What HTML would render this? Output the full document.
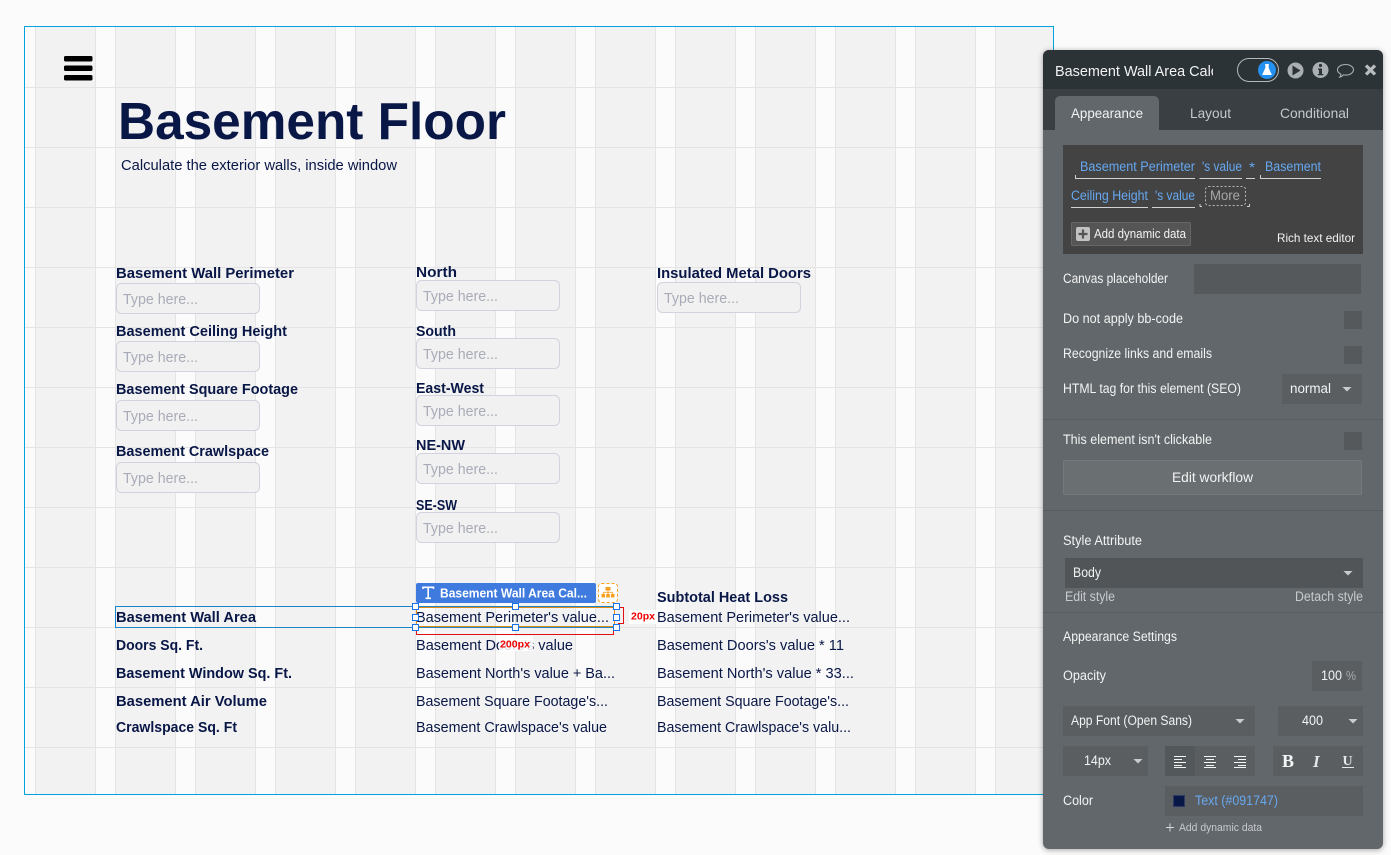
<!DOCTYPE html>
<html lang="en"><head><meta charset="utf-8"><title>Basement Floor</title>
<style>
html,body{margin:0;padding:0;background:#fbfbfb;width:1391px;height:855px;overflow:hidden}
svg{display:block}
text{font-family:"Liberation Sans",sans-serif;white-space:pre}
.l{font-size:14.5px;font-weight:700;fill:#091747}
.b{font-size:14.5px;fill:#091747}
.p{font-size:14.5px;fill:#a9acb8}
.w{font-size:13.5px;fill:#f2f3f3}
.u{font-size:13.5px;fill:#66a8f0}
.s{font-size:13.5px;fill:#c8cbcd}
.r{font-size:10px;font-weight:700;fill:#f00000}
.i{fill:#f1f1f1;stroke:#d2d3de;stroke-width:1}
.k{fill:#55595c}
.d{fill:#5a5e61}
.h{fill:#fff;stroke:#1a73e8;stroke-width:1.2}
.ul{stroke:#d0d2d3;stroke-width:1;fill:none}
.a{fill:#c9cccd}
.t{fill:#f4f5f5}
</style></head><body>
<svg width="1391" height="855" viewBox="0 0 1391 855" xmlns="http://www.w3.org/2000/svg" shape-rendering="crispEdges">
<defs>
<pattern id="c" patternUnits="userSpaceOnUse" x="35" y="0" width="80" height="60"><rect width="60" height="60" fill="#f2f2f2"/><rect width="1" height="60" fill="#e4e4e4"/><rect x="60" width="1" height="60" fill="#e4e4e4"/></pattern>
<clipPath id="hc"><rect x="1050" y="55" width="163" height="30"/></clipPath>
</defs>
<rect width="1391" height="855" fill="#fbfbfb"/>
<rect x="25" y="27" width="1028" height="767" fill="url(#c)"/>
<g fill="#e4e4e4"><rect x="25" y="87" width="1028" height="1"/><rect x="25" y="147" width="1028" height="1"/><rect x="25" y="207" width="1028" height="1"/><rect x="25" y="267" width="1028" height="1"/><rect x="25" y="327" width="1028" height="1"/><rect x="25" y="387" width="1028" height="1"/><rect x="25" y="447" width="1028" height="1"/><rect x="25" y="507" width="1028" height="1"/><rect x="25" y="567" width="1028" height="1"/><rect x="25" y="627" width="1028" height="1"/><rect x="25" y="687" width="1028" height="1"/><rect x="25" y="747" width="1028" height="1"/></g>
<rect x="24.5" y="26.5" width="1029" height="768" fill="none" stroke="#00a3dc"/>

<g fill="#000" shape-rendering="auto"><rect x="64" y="56" width="28.5" height="5.5" rx="1.6"/><rect x="64" y="65.5" width="28.5" height="5.5" rx="1.6"/><rect x="64" y="75" width="28.5" height="5.5" rx="1.6"/></g>

<g shape-rendering="auto">
<text x="118" y="139" font-size="52" font-weight="700" fill="#091747" textLength="388" lengthAdjust="spacingAndGlyphs">Basement Floor</text>
<text class="b" x="121" y="170" textLength="276" lengthAdjust="spacingAndGlyphs">Calculate the exterior walls, inside window</text>

<text class="l" x="116" y="278" textLength="178" lengthAdjust="spacingAndGlyphs">Basement Wall Perimeter</text>
<rect class="i" x="116.500" y="283.500" width="143" height="30" rx="5"/><text class="p" x="123" y="304" textLength="75" lengthAdjust="spacingAndGlyphs">Type here...</text>
<text class="l" x="116" y="336" textLength="171" lengthAdjust="spacingAndGlyphs">Basement Ceiling Height</text>
<rect class="i" x="116.500" y="341.500" width="143" height="30" rx="5"/><text class="p" x="123" y="362" textLength="75" lengthAdjust="spacingAndGlyphs">Type here...</text>
<text class="l" x="116" y="394" textLength="182" lengthAdjust="spacingAndGlyphs">Basement Square Footage</text>
<rect class="i" x="116.500" y="400.500" width="143" height="30" rx="5"/><text class="p" x="123" y="421" textLength="75" lengthAdjust="spacingAndGlyphs">Type here...</text>
<text class="l" x="116" y="456" textLength="153" lengthAdjust="spacingAndGlyphs">Basement Crawlspace</text>
<rect class="i" x="116.500" y="462.500" width="143" height="30" rx="5"/><text class="p" x="123" y="483" textLength="75" lengthAdjust="spacingAndGlyphs">Type here...</text>

<text class="l" x="416" y="277" textLength="41" lengthAdjust="spacingAndGlyphs">North</text>
<rect class="i" x="416.500" y="280.500" width="143" height="30" rx="5"/><text class="p" x="423" y="301" textLength="75" lengthAdjust="spacingAndGlyphs">Type here...</text>
<text class="l" x="416" y="336" textLength="40" lengthAdjust="spacingAndGlyphs">South</text>
<rect class="i" x="416.500" y="338.500" width="143" height="30" rx="5"/><text class="p" x="423" y="359" textLength="75" lengthAdjust="spacingAndGlyphs">Type here...</text>
<text class="l" x="416" y="393" textLength="68" lengthAdjust="spacingAndGlyphs">East-West</text>
<rect class="i" x="416.500" y="395.500" width="143" height="30" rx="5"/><text class="p" x="423" y="416" textLength="75" lengthAdjust="spacingAndGlyphs">Type here...</text>
<text class="l" x="416" y="450" textLength="49" lengthAdjust="spacingAndGlyphs">NE-NW</text>
<rect class="i" x="416.500" y="453.500" width="143" height="30" rx="5"/><text class="p" x="423" y="474" textLength="75" lengthAdjust="spacingAndGlyphs">Type here...</text>
<text class="l" x="416" y="510" textLength="41" lengthAdjust="spacingAndGlyphs">SE-SW</text>
<rect class="i" x="416.500" y="512.500" width="143" height="30" rx="5"/><text class="p" x="423" y="533" textLength="75" lengthAdjust="spacingAndGlyphs">Type here...</text>

<text class="l" x="657" y="278" textLength="154" lengthAdjust="spacingAndGlyphs">Insulated Metal Doors</text>
<rect class="i" x="657.500" y="282.500" width="143" height="30" rx="5"/><text class="p" x="664" y="303" textLength="75" lengthAdjust="spacingAndGlyphs">Type here...</text>

<text class="l" x="116" y="622" textLength="140" lengthAdjust="spacingAndGlyphs">Basement Wall Area</text>
<text class="l" x="116" y="650" textLength="87" lengthAdjust="spacingAndGlyphs">Doors Sq. Ft.</text>
<text class="l" x="116" y="678" textLength="176" lengthAdjust="spacingAndGlyphs">Basement Window Sq. Ft.</text>
<text class="l" x="116" y="706" textLength="151" lengthAdjust="spacingAndGlyphs">Basement Air Volume</text>
<text class="l" x="116" y="732" textLength="121" lengthAdjust="spacingAndGlyphs">Crawlspace Sq. Ft</text>

<text class="b" x="416" y="622" textLength="193" lengthAdjust="spacingAndGlyphs">Basement Perimeter's value...</text>
<text class="b" x="416" y="650" textLength="157" lengthAdjust="spacingAndGlyphs">Basement Doors's value</text>
<text class="b" x="416" y="678" textLength="199" lengthAdjust="spacingAndGlyphs">Basement North's value + Ba...</text>
<text class="b" x="416" y="706" textLength="192" lengthAdjust="spacingAndGlyphs">Basement Square Footage's...</text>
<text class="b" x="416" y="732" textLength="191" lengthAdjust="spacingAndGlyphs">Basement Crawlspace's value</text>

<text class="l" x="657" y="602" textLength="131" lengthAdjust="spacingAndGlyphs">Subtotal Heat Loss</text>
<text class="b" x="657" y="622" textLength="193" lengthAdjust="spacingAndGlyphs">Basement Perimeter's value...</text>
<text class="b" x="657" y="650" textLength="187" lengthAdjust="spacingAndGlyphs">Basement Doors's value * 11</text>
<text class="b" x="657" y="678" textLength="197" lengthAdjust="spacingAndGlyphs">Basement North's value * 33...</text>
<text class="b" x="657" y="706" textLength="192" lengthAdjust="spacingAndGlyphs">Basement Square Footage's...</text>
<text class="b" x="657" y="732" textLength="194" lengthAdjust="spacingAndGlyphs">Basement Crawlspace's valu...</text>
</g>

<!-- selection -->
<rect x="115.500" y="606.500" width="301" height="21" fill="none" stroke="#1a86c8"/>
<rect x="416.500" y="607.500" width="198" height="19" fill="none" stroke="#e58a12" stroke-width="1"/>
<rect x="416" y="606" width="200" height="1" fill="#1a86c8"/>
<rect x="416" y="627" width="200" height="1" fill="#1a86c8"/>
<path d="M416.500 629V634.500H613.500V629M618 607.500H623.500V623.500H618" fill="none" stroke="#e01010"/>
<rect x="629" y="610" width="28" height="14" fill="#fff"/>
<rect x="499" y="636" width="34" height="15" fill="#fff" opacity=".85"/>
<g shape-rendering="auto">
<text class="r" x="631" y="619.500" textLength="24" lengthAdjust="spacingAndGlyphs">20px</text>
<text class="r" x="500" y="647.500" textLength="30" lengthAdjust="spacingAndGlyphs">200px</text>
<rect x="416" y="583" width="180" height="20" rx="2" fill="#3f7bdf"/>
<path d="M423 589V587.300H433.500V589M428.200 587.300V598.300M425.500 598.300H431" fill="none" stroke="#fff" stroke-width="1.600"/>
<text x="440" y="597.500" font-size="12.500" font-weight="700" fill="#fff" textLength="147" lengthAdjust="spacingAndGlyphs">Basement Wall Area Cal...</text>
<rect x="598.500" y="583.500" width="19" height="19" rx="3" fill="#fff" stroke="#f5a623" stroke-dasharray="3 2"/>
<path d="M605.500 587h5v3.500h-5zM601.500 594h3.600v3.500h-3.600zM606.200 594h3.600v3.500h-3.600zM610.900 594h3.600v3.500h-3.600z" fill="#f5a020"/>
<path d="M608 590.500V594M603.300 594V592.300H612.700V594" fill="none" stroke="#f5a020" stroke-width=".8"/>
</g>
<g>
<rect class="h" x="412.500" y="603.500" width="6" height="6"/><rect class="h" x="512.500" y="603.500" width="6" height="6"/><rect class="h" x="613.500" y="603.500" width="6" height="6"/>
<rect class="h" x="412.500" y="614.500" width="6" height="6"/><rect class="h" x="613.500" y="614.500" width="6" height="6"/>
<rect class="h" x="412.500" y="624.500" width="6" height="6"/><rect class="h" x="512.500" y="624.500" width="6" height="6"/><rect class="h" x="613.500" y="624.500" width="6" height="6"/>
</g>

<!-- panel -->
<g shape-rendering="auto">
<rect x="1043" y="50" width="340" height="799" rx="6" fill="#62676b" style="filter:drop-shadow(0 1px 3px rgba(0,0,0,.35))"/>
<path d="M1043 89V56a6 6 0 0 1 6-6H1377a6 6 0 0 1 6 6V89Z" fill="#2b3337"/>
<rect x="1043" y="89" width="340" height="41" fill="#393f43"/>
<path d="M1055 130V101a5 5 0 0 1 5-5H1154a5 5 0 0 1 5 5V130Z" fill="#62676b"/>

<g clip-path="url(#hc)"><text x="1055" y="76" font-size="14.500" fill="#f2f3f3" textLength="163" lengthAdjust="spacingAndGlyphs">Basement Wall Area Calc</text></g>
<rect x="1237.500" y="58.500" width="41" height="23" rx="11.500" fill="none" stroke="#b5b9bb" stroke-width="1"/>
<circle cx="1267" cy="70" r="9" fill="#2490f0"/>
<path d="M1265.200 64.500H1268.800M1265.800 64.500V68L1262.800 74.500H1271.200L1268.200 68V64.500" fill="#fff" stroke="#fff" stroke-width=".9" stroke-linejoin="round"/>
<circle cx="1295.500" cy="70.500" r="8" fill="#a9afb2"/><path d="M1292.500 65.500L1300.500 70.500L1292.500 75.500Z" fill="#2b3337"/>
<circle cx="1320.500" cy="70" r="8" fill="#a9afb2"/><circle cx="1320.500" cy="65.500" r="1.600" fill="#2b3337"/><path d="M1318 68.500H1322V74H1323.300V75.300H1317.800V74H1319V69.800H1318Z" fill="#2b3337"/>
<path d="M1345.500 64.500c4.600 0 8 2.400 8 5.300s-3.400 5.300-8 5.300c-.8 0-1.400 0-2.100-.2-1 1.100-2.300 2-3.700 2.200.7-.8 1.200-1.700 1.300-2.900-2.100-.9-3.500-2.500-3.500-4.400 0-2.900 3.400-5.300 8-5.300Z" fill="none" stroke="#a9afb2" stroke-width="1.100"/>
<path d="M1366 65.500L1375 74.500M1375 65.500L1366 74.500" stroke="#b7bcbe" stroke-width="3.300" stroke-linecap="butt"/>

<text x="1071" y="118" font-size="14" fill="#f2f3f3" textLength="72" lengthAdjust="spacingAndGlyphs">Appearance</text>
<text x="1190" y="118" font-size="14" fill="#c6c9cb" textLength="41" lengthAdjust="spacingAndGlyphs">Layout</text>
<text x="1280" y="118" font-size="14" fill="#c6c9cb" textLength="69" lengthAdjust="spacingAndGlyphs">Conditional</text>

<rect x="1063" y="145" width="300" height="109" fill="#434343"/>
<text class="u" x="1080" y="171" textLength="115" lengthAdjust="spacingAndGlyphs">Basement Perimeter</text>
<text class="u" x="1202" y="171" textLength="40" lengthAdjust="spacingAndGlyphs">'s value</text>
<text class="u" x="1249" y="172" textLength="6" lengthAdjust="spacingAndGlyphs">*</text>
<text class="u" x="1265" y="171" textLength="56" lengthAdjust="spacingAndGlyphs">Basement</text>
<text class="u" x="1071" y="200" textLength="77" lengthAdjust="spacingAndGlyphs">Ceiling Height</text>
<text class="u" x="1155" y="200" textLength="40" lengthAdjust="spacingAndGlyphs">'s value</text>
<path class="ul" d="M1075.500 175V178.500H1195M1199.500 178.500H1242M1246 178.500H1255M1260.500 175V178.500H1321M1071 207.500H1148M1152 207.500H1195M1200 204V206.500M1200 206.500H1202M1249.500 206.500V204M1249.500 206.500H1247"/>
<rect x="1205.500" y="186.500" width="40" height="19" rx="3" fill="none" stroke="#b8b8b8" stroke-dasharray="2 2"/>
<text x="1210" y="200" font-size="13.500" fill="#a8a8a8" textLength="30" lengthAdjust="spacingAndGlyphs">More</text>
<rect x="1071.500" y="222.500" width="119" height="23" rx="1" fill="#555" stroke="#666"/>
<rect x="1076" y="227" width="14" height="14" rx="2" fill="#c2c2c2"/><path d="M1083 229.500V238.500M1078.500 234H1087.500" stroke="#555" stroke-width="2.200"/>
<text x="1094" y="238" font-size="12.500" fill="#f2f3f3" textLength="92" lengthAdjust="spacingAndGlyphs">Add dynamic data</text>
<text x="1277" y="242" font-size="12" fill="#f2f3f3" textLength="78" lengthAdjust="spacingAndGlyphs">Rich text editor</text>

<text class="w" x="1063" y="283" textLength="105" lengthAdjust="spacingAndGlyphs">Canvas placeholder</text>
<rect x="1194" y="264" width="167" height="30" class="k"/>
<text class="w" x="1063" y="323" textLength="120" lengthAdjust="spacingAndGlyphs">Do not apply bb-code</text>
<rect x="1344" y="311" width="18" height="18" class="k"/>
<text class="w" x="1063" y="358" textLength="149" lengthAdjust="spacingAndGlyphs">Recognize links and emails</text>
<rect x="1344" y="346" width="18" height="18" class="k"/>
<text class="w" x="1063" y="393" textLength="178" lengthAdjust="spacingAndGlyphs">HTML tag for this element (SEO)</text>
<rect x="1282" y="374" width="80" height="30" class="d"/>
<text class="w" x="1290" y="393" textLength="41" lengthAdjust="spacingAndGlyphs">normal</text>
<path class="a" d="M1342.500 387H1351.500L1347 391.500Z"/>
<rect x="1043" y="419" width="340" height="1" fill="#575c5f"/>
<text class="w" x="1063" y="444" textLength="149" lengthAdjust="spacingAndGlyphs">This element isn't clickable</text>
<rect x="1344" y="432" width="18" height="18" class="k"/>
<rect x="1063.500" y="460.500" width="298" height="34" rx="1" fill="#6a6f72" stroke="#74797c"/>
<text x="1172" y="482" font-size="14" fill="#f2f3f3" textLength="81" lengthAdjust="spacingAndGlyphs">Edit workflow</text>
<rect x="1043" y="510" width="340" height="1" fill="#575c5f"/>
<text class="w" x="1063" y="545" textLength="79" lengthAdjust="spacingAndGlyphs">Style Attribute</text>
<rect x="1065" y="558" width="298" height="30" fill="#515558"/>
<text class="w" x="1073" y="577" textLength="28" lengthAdjust="spacingAndGlyphs">Body</text>
<path class="a" d="M1343.500 571H1352.500L1348 575.500Z"/>
<text class="s" x="1065" y="601" textLength="50" lengthAdjust="spacingAndGlyphs">Edit style</text>
<text class="s" x="1295" y="601" textLength="68" lengthAdjust="spacingAndGlyphs">Detach style</text>
<rect x="1043" y="612" width="340" height="1" fill="#575c5f"/>
<text class="w" x="1063" y="641" textLength="114" lengthAdjust="spacingAndGlyphs">Appearance Settings</text>
<text class="w" x="1063" y="680" textLength="43" lengthAdjust="spacingAndGlyphs">Opacity</text>
<rect x="1312" y="661" width="50" height="30" class="d"/>
<text class="w" x="1321" y="680" textLength="21" lengthAdjust="spacingAndGlyphs">100</text>
<text x="1346" y="680" font-size="13" fill="#a9adaf" textLength="10" lengthAdjust="spacingAndGlyphs">%</text>
<rect x="1063" y="706" width="192" height="30" class="d"/>
<text class="w" x="1071" y="725" textLength="121" lengthAdjust="spacingAndGlyphs">App Font (Open Sans)</text>
<path class="a" d="M1235.500 719H1244.500L1240 723.500Z"/>
<rect x="1278" y="706" width="85" height="30" class="d"/>
<text class="w" x="1302" y="725" textLength="21" lengthAdjust="spacingAndGlyphs">400</text>
<path class="a" d="M1348.500 719H1357.500L1353 723.500Z"/>
<rect x="1063" y="746" width="85" height="30" class="d"/>
<text class="w" x="1084" y="765" textLength="27" lengthAdjust="spacingAndGlyphs">14px</text>
<path class="a" d="M1133.500 759H1142.500L1138 763.500Z"/>
<rect x="1165" y="746" width="90" height="30" class="d"/>
<rect x="1165" y="746" width="30" height="30" fill="#53585a"/>
<g class="t" shape-rendering="crispEdges">
<rect x="1174" y="756" width="12" height="1"/><rect x="1174" y="759" width="8" height="1"/><rect x="1174" y="762" width="12" height="1"/><rect x="1174" y="765" width="8" height="1"/><rect x="1174" y="767" width="12" height="1"/>
<rect x="1204" y="756" width="12" height="1"/><rect x="1206" y="759" width="8" height="1"/><rect x="1204" y="762" width="12" height="1"/><rect x="1206" y="765" width="8" height="1"/><rect x="1204" y="767" width="12" height="1"/>
<rect x="1234" y="756" width="12" height="1"/><rect x="1238" y="759" width="8" height="1"/><rect x="1234" y="762" width="12" height="1"/><rect x="1238" y="765" width="8" height="1"/><rect x="1234" y="767" width="12" height="1"/>
</g>
<rect x="1273" y="746" width="90" height="30" class="d"/>
<text x="1282" y="767" style="font-family:'Liberation Serif',serif" font-size="18" font-weight="700" fill="#f4f5f5">B</text>
<text x="1313" y="767" style="font-family:'Liberation Serif',serif" font-size="17" font-weight="700" font-style="italic" fill="#e4e6e7">I</text>
<text x="1342.500" y="765" style="font-family:'Liberation Serif',serif" font-size="14" font-weight="700" fill="#e4e6e7">U</text>
<rect x="1342" y="767" width="12" height="1" fill="#e4e6e7"/>
<text class="w" x="1063" y="805" textLength="30" lengthAdjust="spacingAndGlyphs">Color</text>
<rect x="1165" y="786" width="198" height="30" class="d"/>
<rect x="1173.500" y="795.500" width="11" height="11" fill="#091747" stroke="#2e3a66"/>
<text class="u" x="1195" y="805" textLength="83" lengthAdjust="spacingAndGlyphs">Text (#091747)</text>
<path d="M1170 823.500V831.500M1166 827.500H1174" stroke="#d5d7d8" stroke-width="1"/>
<text x="1179" y="831" font-size="11" fill="#c8cbcd" textLength="83" lengthAdjust="spacingAndGlyphs">Add dynamic data</text>
</g>
</svg>
</body></html>
